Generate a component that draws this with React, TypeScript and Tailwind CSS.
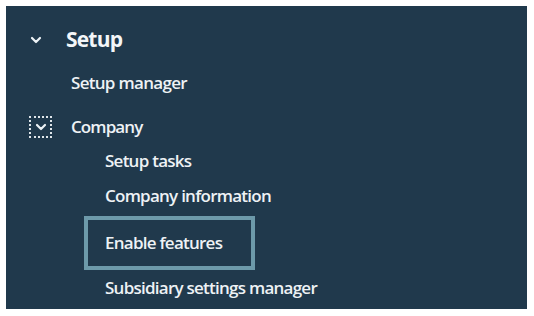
const Chevron = ({ size = 12 }: { size?: number }) => (
  <svg width={size} height={size} viewBox="0 0 12 12" fill="none">
    <path d="M2 4l4 4 4-4" stroke="#eef3f6" strokeWidth="2.2" strokeLinecap="round" strokeLinejoin="round" />
  </svg>
);

const SubItem = ({ label, className = "" }: { label: string; className?: string }) => (
  <div className={`h-6 pl-[99px] flex items-center text-[17px] font-semibold text-[#eef2f5] tracking-[-0.75px] ${className}`}>
    {label}
  </div>
);

export default function App() {
  return (
    <div className="w-[534px] h-[316px] bg-white p-[6px]" style={{ fontFamily: '"Open Sans", "Noto Sans", sans-serif' }}>
      <div className="w-[521px] h-[303px] bg-[#20394c] flex flex-col">
        <div className="mt-[20px] h-7 flex items-center">
          <div className="w-[60px] pl-[24px] flex items-center">
            <Chevron size={12} />
          </div>
          <span className="text-[21px] font-bold text-[#f3f6f8] tracking-[-0.8px]">Setup</span>
        </div>

        <div className="mt-[17px] h-6 pl-[65px] flex items-center text-[17px] font-semibold text-[#eef2f5] tracking-[-0.7px]">
          Setup manager
        </div>

        <div className="mt-[20px] h-6 flex items-center">
          <div className="w-[65px] pl-[23px] flex items-center">
            <div className="w-[23px] h-[22px] border-2 border-dotted border-[#dfe6ea] flex items-center justify-center">
              <Chevron size={12} />
            </div>
          </div>
          <span className="text-[17px] font-semibold text-[#eef2f5] tracking-[-0.9px]">Company</span>
        </div>

        <SubItem label="Setup tasks" className="mt-[10px]" />
        <SubItem label="Company information" className="mt-[11px]" />

        <div className="mt-[8px] ml-[78px] w-[171px] h-[54px] border-4 border-[#6d9aaa] flex items-center pl-[17px] text-[17px] font-semibold text-[#eef2f5] tracking-[-0.75px]">
          Enable features
        </div>

        <SubItem label="Subsidiary settings manager" className="mt-[6px]" />
      </div>
    </div>
  );
}
